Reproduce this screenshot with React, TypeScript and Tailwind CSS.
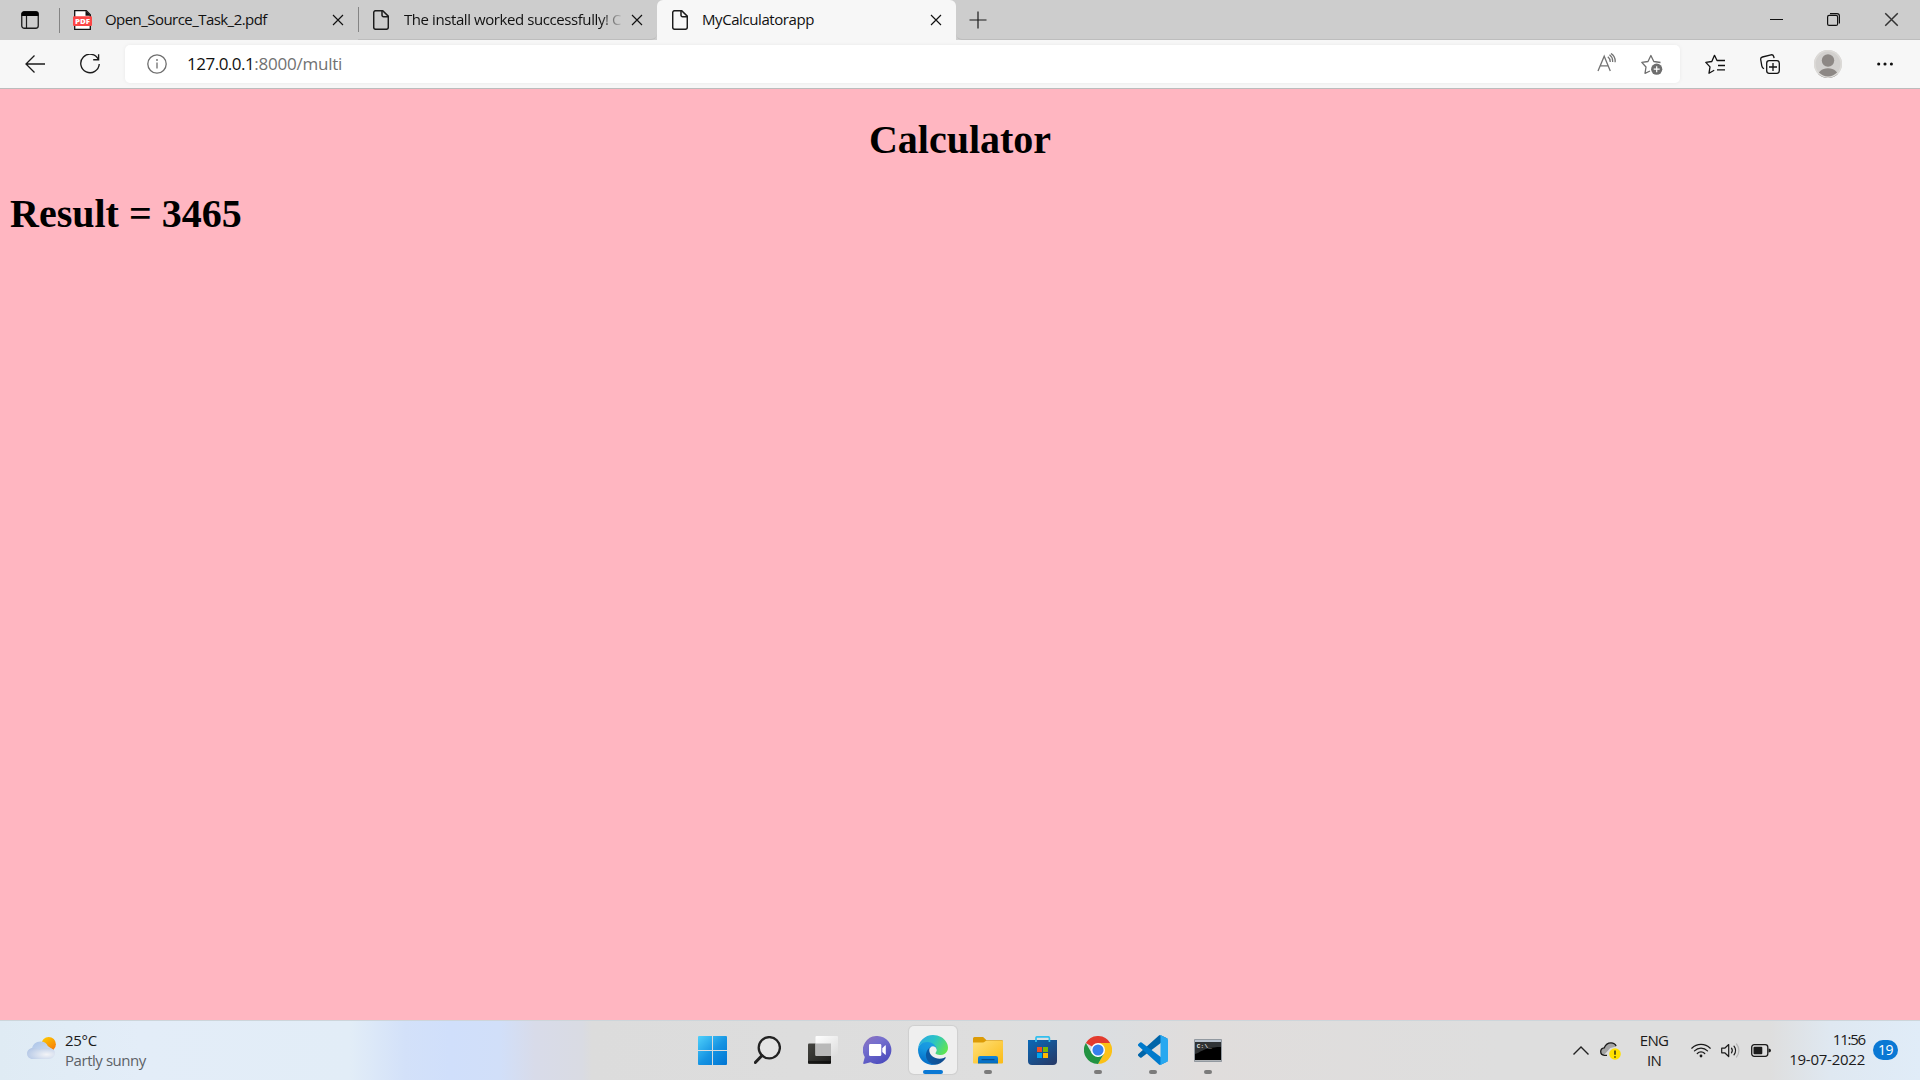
import React from "react";

type IconProps = { className?: string };

function WorkspaceIcon() {
  return (
    <svg className="size-[18px]" viewBox="0 0 18 18" fill="none">
      <rect x=".75" y=".75" width="16.5" height="16.5" rx="2.5" stroke="#1b1b1b" strokeWidth="1.3" />
      <path d="M.5 5V3A2.5 2.5 0 0 1 3 .5h12A2.5 2.5 0 0 1 17.500 3v2z" fill="#000" />
      <path d="M5.500 5v12" stroke="#1b1b1b" strokeWidth="1.2" />
    </svg>
  );
}

function PdfIcon() {
  return (
    <svg className="h-5 w-[19px]" viewBox="0 0 19 20">
      <path d="M1.700.7h11.600l4 4v14.600H1.700z" fill="#fff" stroke="#111" strokeWidth="1.300" />
      <path d="M12.500.7v5h5.200z" fill="#111" />
      <rect y="6.300" width="19" height="9.700" rx="1" fill="#fb4646" />
      <text x="2" y="13.800" fill="#fff" fontSize="7" fontWeight="800" fontFamily="Open Sans, sans-serif" textLength="15" lengthAdjust="spacingAndGlyphs">PDF</text>
    </svg>
  );
}

function PageIcon() {
  return (
    <svg className="h-5 w-4" viewBox="0 0 16 20" fill="none" stroke="#1b1b1b" strokeWidth="1.500">
      <path d="M2.700.7h7L15.300 6.200v11.100a2 2 0 0 1-2 2H2.700a2 2 0 0 1-2-2V2.700a2 2 0 0 1 2-2z" />
      <path d="M9 .9v4.300a1.500 1.500 0 0 0 1.500 1.500h4.700" />
    </svg>
  );
}

function CloseIcon({ className }: IconProps) {
  return (
    <svg className={className} viewBox="0 0 12 12" fill="none" stroke="currentColor" strokeWidth="1.150">
      <path d="M1 1l10 10M11 1 1 11" />
    </svg>
  );
}

function BackIcon() {
  return (
    <svg className="h-[18px] w-5" viewBox="0 0 20 18" fill="none" stroke="#1b1b1b" strokeWidth="1.300">
      <path d="M9.500.5 1 9l8.500 8.500M1 9h19" />
    </svg>
  );
}

function ReloadIcon() {
  return (
    <svg className="size-5" viewBox="0 0 20 20" fill="none" stroke="#1b1b1b" strokeWidth="1.350">
      <path d="M18.400 5.500A9.250 9.250 0 1 0 19.250 10M18.600.3v5.400h-5.400" />
    </svg>
  );
}

function InfoIcon() {
  return (
    <svg className="size-5" viewBox="0 0 20 20" fill="none" stroke="#6e6e6e" strokeWidth="1.300">
      <circle cx="10" cy="10" r="9.200" />
      <path d="M10 8.500v6" />
      <circle cx="10" cy="6" r=".9" fill="#6e6e6e" stroke="none" />
    </svg>
  );
}

function ReadAloudIcon() {
  return (
    <svg className="size-5" viewBox="0 0 20 20" fill="none" stroke="#737373" strokeWidth="1.300">
      <path d="M1 18 7.200 3.200 13.300 18M3.200 12.800h8.200M10.800 3.800c1.700 1.300 2.500 3.200 2.400 5.200M12.500 1.800c2.400 1.800 3.400 4.300 3.100 7.200M14 .5c3.100 2.100 4.500 5.200 4.100 8.700" />
    </svg>
  );
}

function StarAddIcon() {
  return (
    <svg className="h-[21px] w-[22px]" viewBox="0 0 22 21" fill="none">
      <path d="M9 17 4 19.300l1-6.300L.8 8.400l6.200-.9L9.900 1.500l2.900 6 6.700 1" stroke="#6e6e6e" strokeWidth="1.300" strokeLinejoin="round" />
      <circle cx="15.700" cy="15.200" r="5.600" fill="#6e6e6e" />
      <path d="M15.700 12.200v6M12.700 15.200h6" stroke="#fff" strokeWidth="1.200" />
    </svg>
  );
}

function FavoritesIcon() {
  return (
    <svg className="size-5" viewBox="0 0 20 20" fill="none" stroke="#111" strokeWidth="1.300" strokeLinejoin="round">
      <path d="M9.200 16.300 4 19.200l1-6.300L.8 8.400 6.800 7.500 9.500 1.300l2.500 5.200h8M13 11.500h7M12 15.800h8" />
    </svg>
  );
}

function CollectionsIcon() {
  return (
    <svg className="size-5" viewBox="0 0 20 20" fill="none" stroke="#111" strokeWidth="1.300">
      <path d="M4 14.800C2.500 14 2 13 1.800 11.800L.7 5.500c-.2-1.300.5-2.200 1.700-2.500L11 .8c1.200-.2 2.300.3 2.700 1.700l.4 1.700" />
      <rect x="6.700" y="6.700" width="12.600" height="12.600" rx="2.500" />
      <path d="M13 9v8M9 13h8" />
    </svg>
  );
}

function Avatar() {
  return (
    <svg className="size-7" viewBox="0 0 28 28">
      <clipPath id="avatar">
        <circle cx="14" cy="14" r="14" />
      </clipPath>
      <g clipPath="url(#avatar)">
        <rect width="28" height="28" fill="#d2d0ce" />
        <circle cx="14" cy="10.500" r="6.200" fill="#8d8885" />
        <path d="M3.500 28c0-6 4-9.800 10.500-9.800S24.500 22 24.500 28z" fill="#8d8885" />
      </g>
      <circle cx="14" cy="14" r="13.200" fill="none" stroke="#dddbd8" strokeWidth="1.500" />
    </svg>
  );
}

function MoreIcon() {
  return (
    <svg className="h-1 w-4" viewBox="0 0 16 4" fill="#111">
      <circle cx="1.700" cy="2" r="1.550" />
      <circle cx="8" cy="2" r="1.550" />
      <circle cx="14.400" cy="2" r="1.550" />
    </svg>
  );
}

function WeatherIcon() {
  return (
    <svg className="h-[22px] w-[29px]" viewBox="0 0 29 22">
      <defs>
        <linearGradient id="sun" x1="0" y1="0" x2=".7" y2="1">
          <stop stopColor="#ffd000" />
          <stop offset="1" stopColor="#f57c0a" />
        </linearGradient>
        <linearGradient id="cloudBack" x1="0" y1="0" x2="1" y2="1">
          <stop stopColor="#a9c3e8" />
          <stop offset="1" stopColor="#dfe7f3" />
        </linearGradient>
        <radialGradient id="cloudFront" cx=".7" cy=".6" r=".75">
          <stop stopColor="#f3f4f7" />
          <stop offset="1" stopColor="#b5c8e6" />
        </radialGradient>
      </defs>
      <circle cx="21.700" cy="7.200" r="7.200" fill="url(#sun)" />
      <path d="M5 12C5.300 7.500 9 4.500 13.500 4.500c4 0 6.300 1.800 7.300 4.500l5.700 4L14 18z" fill="url(#cloudBack)" />
      <path d="M5.700 11c3 0 5.300.8 6.800 2 2-2 4.500-2.500 8-2 4.500 0 7.500 2 7.500 5.300S25 22 21.500 22h-16C2.500 22 0 19.500 0 16.500S2.500 11 5.700 11z" fill="url(#cloudFront)" />
    </svg>
  );
}

function StartIcon() {
  return (
    <svg className="size-[29px]" viewBox="0 0 29 29">
      <linearGradient id="start" gradientUnits="userSpaceOnUse" x1="0" y1="0" x2="27" y2="29">
        <stop stopColor="#4fd0fb" />
        <stop offset=".55" stopColor="#1593e2" />
        <stop offset="1" stopColor="#0277d4" />
      </linearGradient>
      <path d="M0 1Q0 0 1 0h13v14H0zM15 0h13q1 0 1 1v13H15zM0 15h14v14H1q-1 0-1-1zM15 15h14v13q0 1-1 1H15z" fill="url(#start)" />
    </svg>
  );
}

function SearchIcon() {
  return (
    <svg className="h-[28px] w-[27px]" viewBox="0 0 27 28" fill="none" stroke="#222">
      <circle cx="15.300" cy="11.700" r="10.600" fill="#e4e4e4" strokeWidth="2.300" />
      <path d="M8 19.500 1.300 26.500" strokeWidth="3" strokeLinecap="round" />
    </svg>
  );
}

function TaskViewIcon() {
  return (
    <svg className="h-7 w-[30px]" viewBox="0 0 30 28">
      <defs>
        <linearGradient id="tvDark" x1="0" y1="0" x2="1" y2="1">
          <stop stopColor="#454541" />
          <stop offset="1" stopColor="#1c1c1b" />
        </linearGradient>
        <linearGradient id="tvLight" x1="0" y1="0" x2="1" y2="1">
          <stop stopColor="#fff" />
          <stop offset="1" stopColor="#dcdcdc" />
        </linearGradient>
      </defs>
      <rect y="7.500" width="23" height="20.500" rx="1" fill="url(#tvDark)" />
      <rect x="7.500" width="22.500" height="20" rx="1" fill="url(#tvLight)" />
      <path d="M7.500 7.500H23V20H8.500a1 1 0 0 1-1-1z" fill="#b9b9b9" />
      <path d="M0 26h23" stroke="#000" strokeWidth="1" />
    </svg>
  );
}

function ChatIcon() {
  return (
    <svg className="h-7 w-[29px]" viewBox="0 0 29 28">
      <linearGradient id="chat" x1=".1" y1="0" x2=".7" y2="1">
        <stop stopColor="#8d72bd" />
        <stop offset=".35" stopColor="#756fce" />
        <stop offset="1" stopColor="#4b4bbd" />
      </linearGradient>
      <path d="M14.500 0a14 14 0 1 1-7 26.200L1 28q-1 0-.8-1l1.600-6A14 14 0 0 1 14.500 0z" fill="url(#chat)" />
      <rect x="6" y="8" width="12.300" height="12" rx="1.300" fill="#fff" />
      <path d="M19.300 12.200 22 9.500q.8-.6.800.3v8.500q0 .9-.8.300l-2.700-2.700z" fill="#fff" />
    </svg>
  );
}

function EdgeIcon() {
  return (
    <svg className="size-[30px]" viewBox="0 0 256 256">
      <defs>
        <linearGradient id="edgeDeep" x1=".2" y1=".6" x2="1" y2=".6">
          <stop stopColor="#0c59a4" />
          <stop offset="1" stopColor="#114a8b" />
        </linearGradient>
        <linearGradient id="edgeBlue" x1=".6" y1=".1" x2=".3" y2="1">
          <stop stopColor="#1b9de2" />
          <stop offset=".35" stopColor="#1595df" />
          <stop offset="1" stopColor="#0067c4" />
        </linearGradient>
        <linearGradient id="edgeGreen" x1="0" y1=".3" x2="1" y2=".7">
          <stop stopColor="#2caae2" />
          <stop offset=".45" stopColor="#2bc3c6" />
          <stop offset="1" stopColor="#62e64c" />
        </linearGradient>
      </defs>
      <path fill="url(#edgeDeep)" d="M231 190.500c-3.400 1.800-6.900 3.400-10.500 4.700a101.900 101.900 0 0 1-35.900 6.500c-47.300 0-88.500-32.500-88.500-74.300a31.500 31.500 0 0 1 16.400-27.300c-42.800 1.800-53.800 46.400-53.800 72.500 0 74 68.100 81.400 82.800 81.400 7.900 0 19.800-2.300 27-4.600l1.300-.4a128.300 128.300 0 0 0 66.600-52.800 4 4 0 0 0-5.400-5.700z" />
      <path fill="url(#edgeBlue)" d="M105.700 241.400a79.200 79.200 0 0 1-22.700-21.300 80.700 80.700 0 0 1 29.500-120c3.200-1.500 8.500-4.100 15.600-4a32.400 32.400 0 0 1 25.700 13 31.900 31.900 0 0 1 6.300 18.700c0-.2 24.500-79.600-80-79.600-43.900 0-80 41.700-80 78.200a130.200 130.200 0 0 0 12.100 56 128 128 0 0 0 156.400 67 75.500 75.500 0 0 1-62.800-8z" />
      <path fill="url(#edgeGreen)" d="M152.300 148.900c-.9 1-3.400 2.500-3.400 5.600 0 2.600 1.700 5.200 4.800 7.300 14.300 10 41.400 8.600 41.500 8.600a59.600 59.600 0 0 0 30.300-8.300 61.400 61.400 0 0 0 30.400-52.900c.3-22.400-8-37.300-11.300-43.900C223.500 23.900 177.700 0 128 0A128 128 0 0 0 0 126.200c.5-36.500 36.800-66 80-66 3.500 0 23.500.3 42 10a72.600 72.600 0 0 1 30.900 29.300c6.100 10.600 7.200 24.100 7.200 29.500 0 5.400-2.700 13.300-7.800 19.900z" />
    </svg>
  );
}

function FolderIcon() {
  return (
    <svg className="h-[27px] w-[30px]" viewBox="0 0 30 27">
      <defs>
        <linearGradient id="folder" x1="0" y1="0" x2="1" y2="1">
          <stop stopColor="#ffe07a" />
          <stop offset="1" stopColor="#fbbb15" />
        </linearGradient>
        <linearGradient id="folderBase" x1="0" y1="0" x2="0" y2="1">
          <stop stopColor="#1186dc" />
          <stop offset="1" stopColor="#0269be" />
        </linearGradient>
      </defs>
      <path d="M0 1.500Q0 0 1.500 0h8q1 0 1.700 1l2.300 2.200H29q1 0 1 1V10H0z" fill="#dc9b06" />
      <path d="M0 5.500h10q1 0 2-1l1-.700h16q1 0 1 1v20.700q0 1-1 1H1q-1 0-1-1z" fill="url(#folder)" />
      <path d="M5 26.500v-5.500q0-2 2-2h16q2 0 2 2v5.500z" fill="url(#folderBase)" />
      <path d="M9 22.700h12" stroke="#0a4d8a" strokeWidth="1.200" strokeLinecap="round" />
    </svg>
  );
}

function StoreIcon() {
  return (
    <svg className="size-[29px]" viewBox="0 0 29 29">
      <defs>
        <linearGradient id="store" x1="0" y1="0" x2=".8" y2="1">
          <stop stopColor="#0a69b8" />
          <stop offset="1" stopColor="#253c6b" />
        </linearGradient>
      </defs>
      <path d="M0 4h29v21q0 4-4 4H4q-4 0-4-4z" fill="url(#store)" />
      <path d="M8 6V2q0-1.200 1.200-1.200h11Q21.400.800 21.400 2v4" fill="none" stroke="#32bfee" strokeWidth="1.700" />
      <path d="M9 11h5v5H9z" fill="#f25022" />
      <path d="M15 11h5v5h-5z" fill="#7fba00" />
      <path d="M9 17h5v5H9z" fill="#00a4ef" />
      <path d="M15 17h5v5h-5z" fill="#ffb900" />
    </svg>
  );
}

function ChromeIcon() {
  return (
    <svg className="size-7" viewBox="0 0 48 48">
      <path d="M24 24 3.200 12A24 24 0 0 1 44.800 12z" fill="#e33b2e" />
      <path d="M24 12h20.800A24 24 0 0 1 24 48l10.400-18z" fill="#fbc116" />
      <path d="M3.200 12 13.600 30 24 36l10.400-6L24 48A24 24 0 0 1 3.200 12z" fill="#229342" />
      <circle cx="24" cy="24" r="12" fill="#fff" />
      <circle cx="24" cy="24" r="9.500" fill="#3780ec" />
    </svg>
  );
}

function VsCodeIcon() {
  return (
    <svg className="size-[30px]" viewBox="0 0 100 100">
      <path d="M96.500 10.700 75.900.9a6.200 6.200 0 0 0-7.100 1.200L1.300 63.600a4.200 4.200 0 0 0 0 6.200l5.500 5a4.200 4.200 0 0 0 5.300.2L93.400 13.400a4.100 4.100 0 0 1 6.600 3.300v-.3a6.300 6.300 0 0 0-3.500-5.700z" fill="#0065a9" />
      <path d="M96.500 89.300 75.900 99.100a6.200 6.200 0 0 1-7.100-1.200L1.300 36.400a4.200 4.200 0 0 1 0-6.200l5.500-5a4.200 4.200 0 0 1 5.300-.2l81.300 61.600a4.100 4.100 0 0 0 6.600-3.300v.3a6.300 6.300 0 0 1-3.500 5.700z" fill="#007acc" />
      <path d="M75.900 99.100a6.200 6.200 0 0 1-7.100-1.200 3.700 3.700 0 0 0 6.200-2.600V4.700a3.700 3.700 0 0 0-6.200-2.600A6.200 6.200 0 0 1 75.900.9l20.600 9.900A6.300 6.300 0 0 1 100 16.400v67.200a6.300 6.300 0 0 1-3.500 5.700z" fill="#28a8f0" />
    </svg>
  );
}

function TerminalIcon() {
  return (
    <svg className="h-[23px] w-7" viewBox="0 0 28 23">
      <rect x=".5" y=".5" width="27" height="22" rx=".5" fill="#000" stroke="#9299a0" />
      <path d="M1 1h26v2H1z" fill="#b9c3cf" />
      <path d="M1 3h26v5C17 8 10 10 4 14l-3 1z" fill="#303335" />
      <path d="M1 21.500h26" stroke="#b0b4b8" />
      <text x="2.800" y="8.700" fill="#e8e8e8" fontSize="6" fontFamily="Liberation Mono, monospace" fontWeight="700" textLength="15">C:\_</text>
    </svg>
  );
}

function ChevronUpIcon() {
  return (
    <svg className="h-[9px] w-4" viewBox="0 0 16 9" fill="none" stroke="#222" strokeWidth="1.400">
      <path d="m.5 8.500 7.500-7.500 7.500 7.500" />
    </svg>
  );
}

function CloudWarningIcon() {
  return (
    <svg className="h-[18px] w-[21px]" viewBox="0 0 21 18">
      <path d="M4 13.300C2 13 .700 11.500.700 9.500S2 6 4.300 5.800C5.500 2.700 8 .800 11 .800c2.500 0 4.500 1.400 5.300 3.700l-6 1.500L4 13z" fill="#a3a3a3" />
      <path d="M7 13.300H4.300C2.300 13.300.700 11.800.700 9.600S2.300 6 4.300 5.800C5.500 2.700 8 .800 11 .800c2.300 0 4.300 1.200 5.100 3.200" fill="none" stroke="#1a1a1a" strokeWidth="1.300" />
      <circle cx="15" cy="12" r="5.800" fill="#ffe100" />
      <path d="M15 8.500v4.300M15 14.200v1.500" stroke="#111" strokeWidth="1.300" />
    </svg>
  );
}

function WifiIcon() {
  return (
    <svg className="h-[15px] w-5" viewBox="0 0 20 15" fill="none" stroke="#1b1b1b" strokeWidth="1.250" strokeLinecap="round">
      <path d="M.8 5.200a13 13 0 0 1 18.400 0M3.500 7.900a9.200 9.200 0 0 1 13 0M6.300 10.500a5.200 5.200 0 0 1 7.400 0" />
      <circle cx="10" cy="13" r="1.400" fill="#1b1b1b" stroke="none" />
    </svg>
  );
}

function VolumeIcon() {
  return (
    <svg className="h-[15px] w-5" viewBox="0 0 20 15" fill="none" stroke="#1b1b1b" strokeWidth="1.200" strokeLinecap="round" strokeLinejoin="round">
      <path d="M.7 5.200v4.600h3l4 3.700v-12l-4 3.700zM10.500 5.200c1 1.400 1 3.200 0 4.600M13 3.200c2 2.700 2 6 0 8.600" />
      <path d="M15.500 1c3.200 3.800 3.200 9.200 0 13" stroke="#b5b5b5" />
    </svg>
  );
}

function BatteryIcon() {
  return (
    <svg className="h-[13px] w-5" viewBox="0 0 20 13" fill="none">
      <rect x=".7" y=".7" width="16.100" height="11.600" rx="2.500" stroke="#1b1b1b" strokeWidth="1.300" />
      <rect x="2.500" y="2.700" width="8.800" height="7.600" rx="1" fill="#1b1b1b" />
      <path d="M17.500 4.500q2.500 0 2.500 2t-2.500 2z" fill="#1b1b1b" />
    </svg>
  );
}

function TabStrip() {
  return (
    <div className="flex h-10 items-center bg-[#cdcdcd] text-[15px] leading-5 text-[#111]">
      <div className="flex h-full w-[59px] items-center pl-[21px]">
        <WorkspaceIcon />
      </div>
      <div className="flex h-full w-[299px] items-center">
        <span className="h-[25px] w-px bg-[#848484]" />
        <span className="ml-[13px]"><PdfIcon /></span>
        <span className="ml-[13px] grow whitespace-nowrap pb-0.5 tracking-[-0.55px]">Open_Source_Task_2.pdf</span>
        <CloseIcon className="mr-[14px] size-3" />
      </div>
      <div className="flex h-full w-[299px] items-center rounded-br-[6px] border-b border-b-[#bdbdbd] bg-[#cdcdcd]">
        <span className="h-[25px] w-px bg-[#848484]" />
        <span className="ml-[14px]"><PageIcon /></span>
        <span className="ml-[15px] w-[218px] whitespace-nowrap pb-px tracking-[-0.42px] [mask-image:linear-gradient(to_right,#000_196px,transparent_220px)]">
          The install worked successfully! C
        </span>
        <CloseIcon className="ml-[9px] size-3" />
      </div>
      <div className="flex h-full w-[299px] items-center rounded-t-[6px] bg-[#f7f7f7]">
        <span className="ml-[15px]"><PageIcon /></span>
        <span className="ml-[14px] grow pb-0.5 tracking-[-0.42px]">MyCalculatorapp</span>
        <CloseIcon className="mr-[14px] size-3" />
      </div>
      <div className="flex h-full grow items-center rounded-bl-[6px] border-b border-b-[#bdbdbd]">
        <svg className="ml-[13px] size-[18px]" viewBox="0 0 18 18" stroke="#1b1b1b" strokeWidth="1.200">
          <path d="M9 .5v17M.5 9h17" />
        </svg>
        <div className="ml-auto flex items-center pr-[21px]">
          <span className="h-px w-[13px] bg-[#111]" />
          <svg className="ml-11 size-[13px]" viewBox="0 0 13 13" fill="none" stroke="#111" strokeWidth="1.200">
            <rect x=".6" y="2.400" width="10" height="10" rx="1.500" />
            <path d="M3 .6h7q2.400 0 2.400 2.400v7.500" />
          </svg>
          <CloseIcon className="ml-[44px] size-[15px] text-[#333]" />
        </div>
      </div>
    </div>
  );
}

function Toolbar() {
  return (
    <div className="flex h-[49px] items-center border-b border-b-[#bcbcbc] bg-[#f7f7f7] pl-[25px]">
      <BackIcon />
      <span className="ml-[35px]"><ReloadIcon /></span>
      <div className="ml-[25px] flex h-[38px] w-[1555px] items-center rounded-[5px] bg-white pl-[22px] pr-[17px] text-[17px] shadow-[0_0_4px_rgba(0,0,0,0.06)]">
        <InfoIcon />
        <span className="ml-[20px] pb-px tracking-[-0.5px] text-[#111]">127.0.0.1</span>
        <span className="grow pb-px tracking-[-0.22px] text-[#717171]">:8000/multi</span>
        <span className="mb-[2px]"><ReadAloudIcon /></span>
        <span className="ml-6"><StarAddIcon /></span>
      </div>
      <div className="flex grow items-center pl-[25px]">
        <FavoritesIcon />
        <span className="ml-[35px]"><CollectionsIcon /></span>
        <span className="ml-[34px]"><Avatar /></span>
        <span className="ml-[35px]"><MoreIcon /></span>
      </div>
    </div>
  );
}

const apps = [
  { name: "Start", icon: StartIcon, state: "idle" },
  { name: "Search", icon: SearchIcon, state: "idle" },
  { name: "Task view", icon: TaskViewIcon, state: "idle" },
  { name: "Chat", icon: ChatIcon, state: "idle" },
  { name: "Edge", icon: EdgeIcon, state: "active" },
  { name: "Explorer", icon: FolderIcon, state: "open" },
  { name: "Store", icon: StoreIcon, state: "idle" },
  { name: "Chrome", icon: ChromeIcon, state: "open" },
  { name: "Code", icon: VsCodeIcon, state: "open" },
  { name: "Terminal", icon: TerminalIcon, state: "open" },
];

function Taskbar() {
  return (
    <div className="flex h-[60px] border-t border-t-[#cdd5da] bg-[linear-gradient(90deg,#dfebf4_0px,#e3edf8_140px,#e2edf7_350px,#d3e1f9_405px,#d0dffb_450px,#d1dff9_500px,#d8dbe9_535px,#d9dbe3_582px,#dcdcdc_592px,#dedede_1000px,#dbdee1_1100px,#e0dddc_1200px,#dedede_1500px,#dedede_1770px,#dfe8f1_1830px,#e0ecf8_1920px)] text-[15px] leading-5 text-[#1b1b1b]">
      <div className="flex w-[685px] items-start pl-[27px] pt-[9px]">
        <span className="mt-[7px]"><WeatherIcon /></span>
        <div className="ml-[9px]">
          <p className="tracking-[-0.3px]">25°C</p>
          <p className="tracking-[-0.45px] text-[#5c6166]">Partly sunny</p>
        </div>
      </div>
      <div className="flex">
        {apps.map(({ name, icon: Icon, state }) => (
          <div key={name} className="flex h-[59px] w-[55px] justify-center pt-[5px]">
            <div className={state === "active" ? "flex h-12 w-12 flex-col items-center rounded-[5px] bg-[#efefef] shadow-[0_0_1px_1px_rgba(0,0,0,0.07)]" : "flex h-12 w-12 flex-col items-center"}>
              <div className="flex h-11 w-full items-center justify-center pt-1">
                <Icon />
              </div>
              {state === "active" && <span className="h-1 w-5 rounded-full bg-[#0a78d4]" />}
              {state === "open" && <span className="h-1 w-2 rounded-full bg-[#7b7b7b]" />}
            </div>
          </div>
        ))}
      </div>
      <div className="ml-auto flex h-[58px] items-center pr-[22px]">
        <ChevronUpIcon />
        <span className="ml-[11px] mt-[2px]"><CloudWarningIcon /></span>
        <div className="ml-[18px] w-[30px] text-center tracking-[-0.7px]">
          <p>ENG</p>
          <p>IN</p>
        </div>
        <span className="ml-[22px]"><WifiIcon /></span>
        <span className="ml-[10px]"><VolumeIcon /></span>
        <span className="ml-[10px]"><BatteryIcon /></span>
        <div className="w-[94px] pb-[2px] text-right">
          <p className="tracking-[-1.2px]">11:56</p>
          <p className="tracking-[-0.25px]">19-07-2022</p>
        </div>
        <span className="ml-2 flex h-5 w-[25px] items-center justify-center rounded-full bg-[#0a78d4] text-[14px] tracking-[-0.5px] text-white">19</span>
      </div>
    </div>
  );
}

export default function App() {
  return (
    <div className="flex h-[1080px] w-[1920px] flex-col overflow-hidden font-['Open_Sans',sans-serif]">
      <div className="bg-[#f7f7f7]">
        <TabStrip />
      </div>
      <Toolbar />
      <main className="grow bg-[#ffb6c1] px-[10px] pt-[28px] font-['Liberation_Serif',serif] text-[40px] font-bold leading-[46px] text-black">
        <h1 className="text-center">Calculator</h1>
        <h1 className="mt-[28px]">Result = 3465</h1>
      </main>
      <Taskbar />
    </div>
  );
}
